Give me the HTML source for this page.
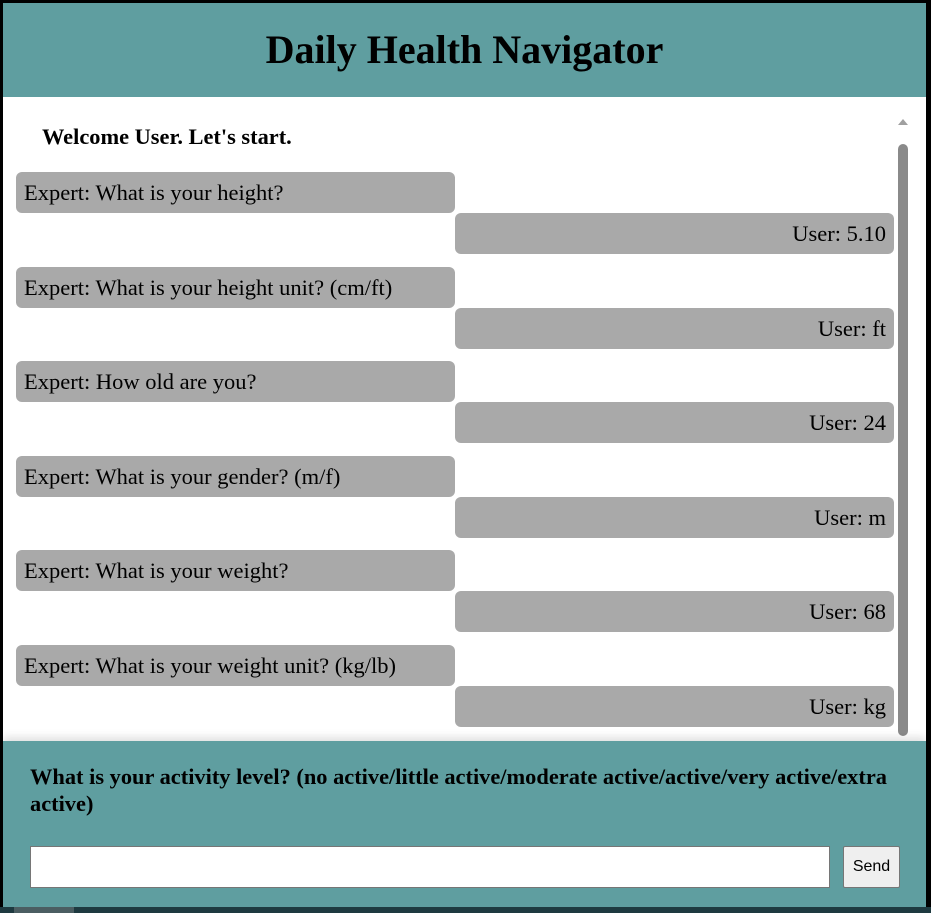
<!DOCTYPE html>
<html><head><style>
*{box-sizing:border-box;margin:0;padding:0}
body{width:931px;height:913px;background:#000;position:relative;overflow:hidden;font-family:"Liberation Serif",serif}
.hdr{position:absolute;left:3px;top:3px;width:923px;height:94px;background:#5f9ea0;text-align:center;font-weight:bold;font-size:40px;line-height:94px;color:#000}
.chat{position:absolute;left:3px;top:97px;width:923px;height:644px;background:#fff;overflow:hidden}
.wel{position:absolute;left:39px;top:27px;font-weight:bold;font-size:22.4px}
.b{position:absolute;height:41px;background:#a9a9a9;border-radius:6px;font-size:22.5px;line-height:42px;padding:0 8px;white-space:nowrap}
.e{left:13px;width:439px}
.u{left:452px;width:439px;text-align:right}
.sb{position:absolute;left:895px;top:47px;width:10px;height:592px;background:#8a8a8a;border-radius:5px}
.arr{position:absolute;left:895px;top:22px;width:0;height:0;border-left:5px solid transparent;border-right:5px solid transparent;border-bottom:6px solid #a0a0a0}
.ft{position:absolute;left:3px;top:741px;width:923px;height:166px;background:#5f9ea0;box-shadow:0 -4px 8px rgba(0,0,0,.12)}
.q{position:absolute;left:27px;top:22px;width:880px;font-weight:bold;font-size:22.4px;line-height:27px}
.in{position:absolute;left:27px;top:105px;width:800px;height:42px;background:#fff;border:1px solid #767676}
.btn{position:absolute;left:840px;top:105px;width:57px;height:42px;background:#efefef;border:1px solid #767676;border-radius:2px;font-family:"Liberation Sans",sans-serif;font-size:16px;text-align:center;line-height:40px}
.bot{position:absolute;left:0;top:907px;width:931px;height:6px;background:#1e3a40}
.bot2{position:absolute;left:14px;top:907px;width:60px;height:6px;background:#4b5e62}
</style></head><body>
<div class="hdr">Daily Health Navigator</div>
<div class="chat">
<div class="wel">Welcome User. Let's start.</div>
<div class="b e" style="top:75px">Expert: What is your height?</div>
<div class="b u" style="top:116px">User: 5.10</div>
<div class="b e" style="top:170px">Expert: What is your height unit? (cm/ft)</div>
<div class="b u" style="top:211px">User: ft</div>
<div class="b e" style="top:264px">Expert: How old are you?</div>
<div class="b u" style="top:305px">User: 24</div>
<div class="b e" style="top:359px">Expert: What is your gender? (m/f)</div>
<div class="b u" style="top:400px">User: m</div>
<div class="b e" style="top:453px">Expert: What is your weight?</div>
<div class="b u" style="top:494px">User: 68</div>
<div class="b e" style="top:548px">Expert: What is your weight unit? (kg/lb)</div>
<div class="b u" style="top:589px">User: kg</div>
<div class="arr"></div><div class="sb"></div>
</div>
<div class="ft">
<div class="q">What is your activity level? (no active/little active/moderate active/active/very active/extra active)</div>
<div class="in"></div>
<div class="btn">Send</div>
</div>
<div class="bot"></div><div class="bot2"></div>
</body></html>
